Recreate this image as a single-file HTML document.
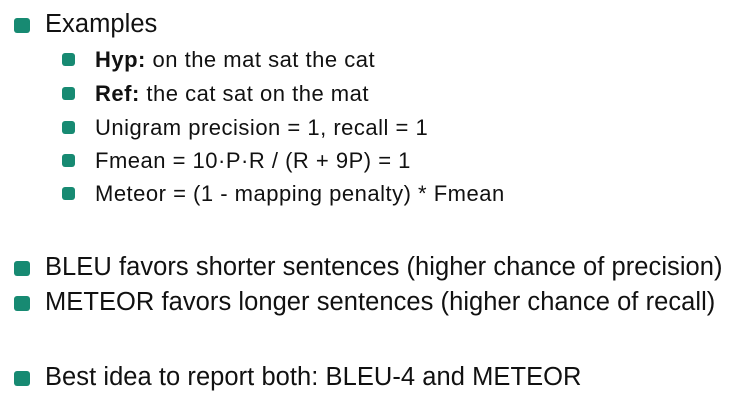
<!DOCTYPE html>
<html><head><style>
body{margin:0;width:746px;height:400px;background:#fff;font-family:"Liberation Sans",Arial,sans-serif;color:#111;position:relative;overflow:hidden}
.l{position:absolute;white-space:nowrap;line-height:1}
.t{left:45px;font-size:25.5px;letter-spacing:0.05px}
.s{left:95px;font-size:22px;letter-spacing:0.5px}
.b{position:absolute;background:#178a72;border-radius:3px}
.bt{left:14px;width:16px;height:15px}
.bs{left:62px;width:13px;height:13px}
</style></head><body>
<div class="b bt" style="top:18px"></div><div class="l t" style="top:12px">Examples</div>
<div class="b bs" style="top:53px"></div><div class="l s" style="top:49px"><b>Hyp:</b> on the mat sat the cat</div>
<div class="b bs" style="top:87px"></div><div class="l s" style="top:83px"><b>Ref:</b> the cat sat on the mat</div>
<div class="b bs" style="top:121px"></div><div class="l s" style="top:117px">Unigram precision = 1, recall = 1</div>
<div class="b bs" style="top:154px"></div><div class="l s" style="top:150px">Fmean = 10·P·R / (R + 9P) = 1</div>
<div class="b bs" style="top:187px"></div><div class="l s" style="top:183px">Meteor = (1 - mapping penalty) * Fmean</div>
<div class="b bt" style="top:261px"></div><div class="l t" style="top:255px">BLEU favors shorter sentences (higher chance of precision)</div>
<div class="b bt" style="top:296px"></div><div class="l t" style="top:290px">METEOR favors longer sentences (higher chance of recall)</div>
<div class="b bt" style="top:371px"></div><div class="l t" style="top:365px">Best idea to report both: BLEU-4 and METEOR</div>
</body></html>
